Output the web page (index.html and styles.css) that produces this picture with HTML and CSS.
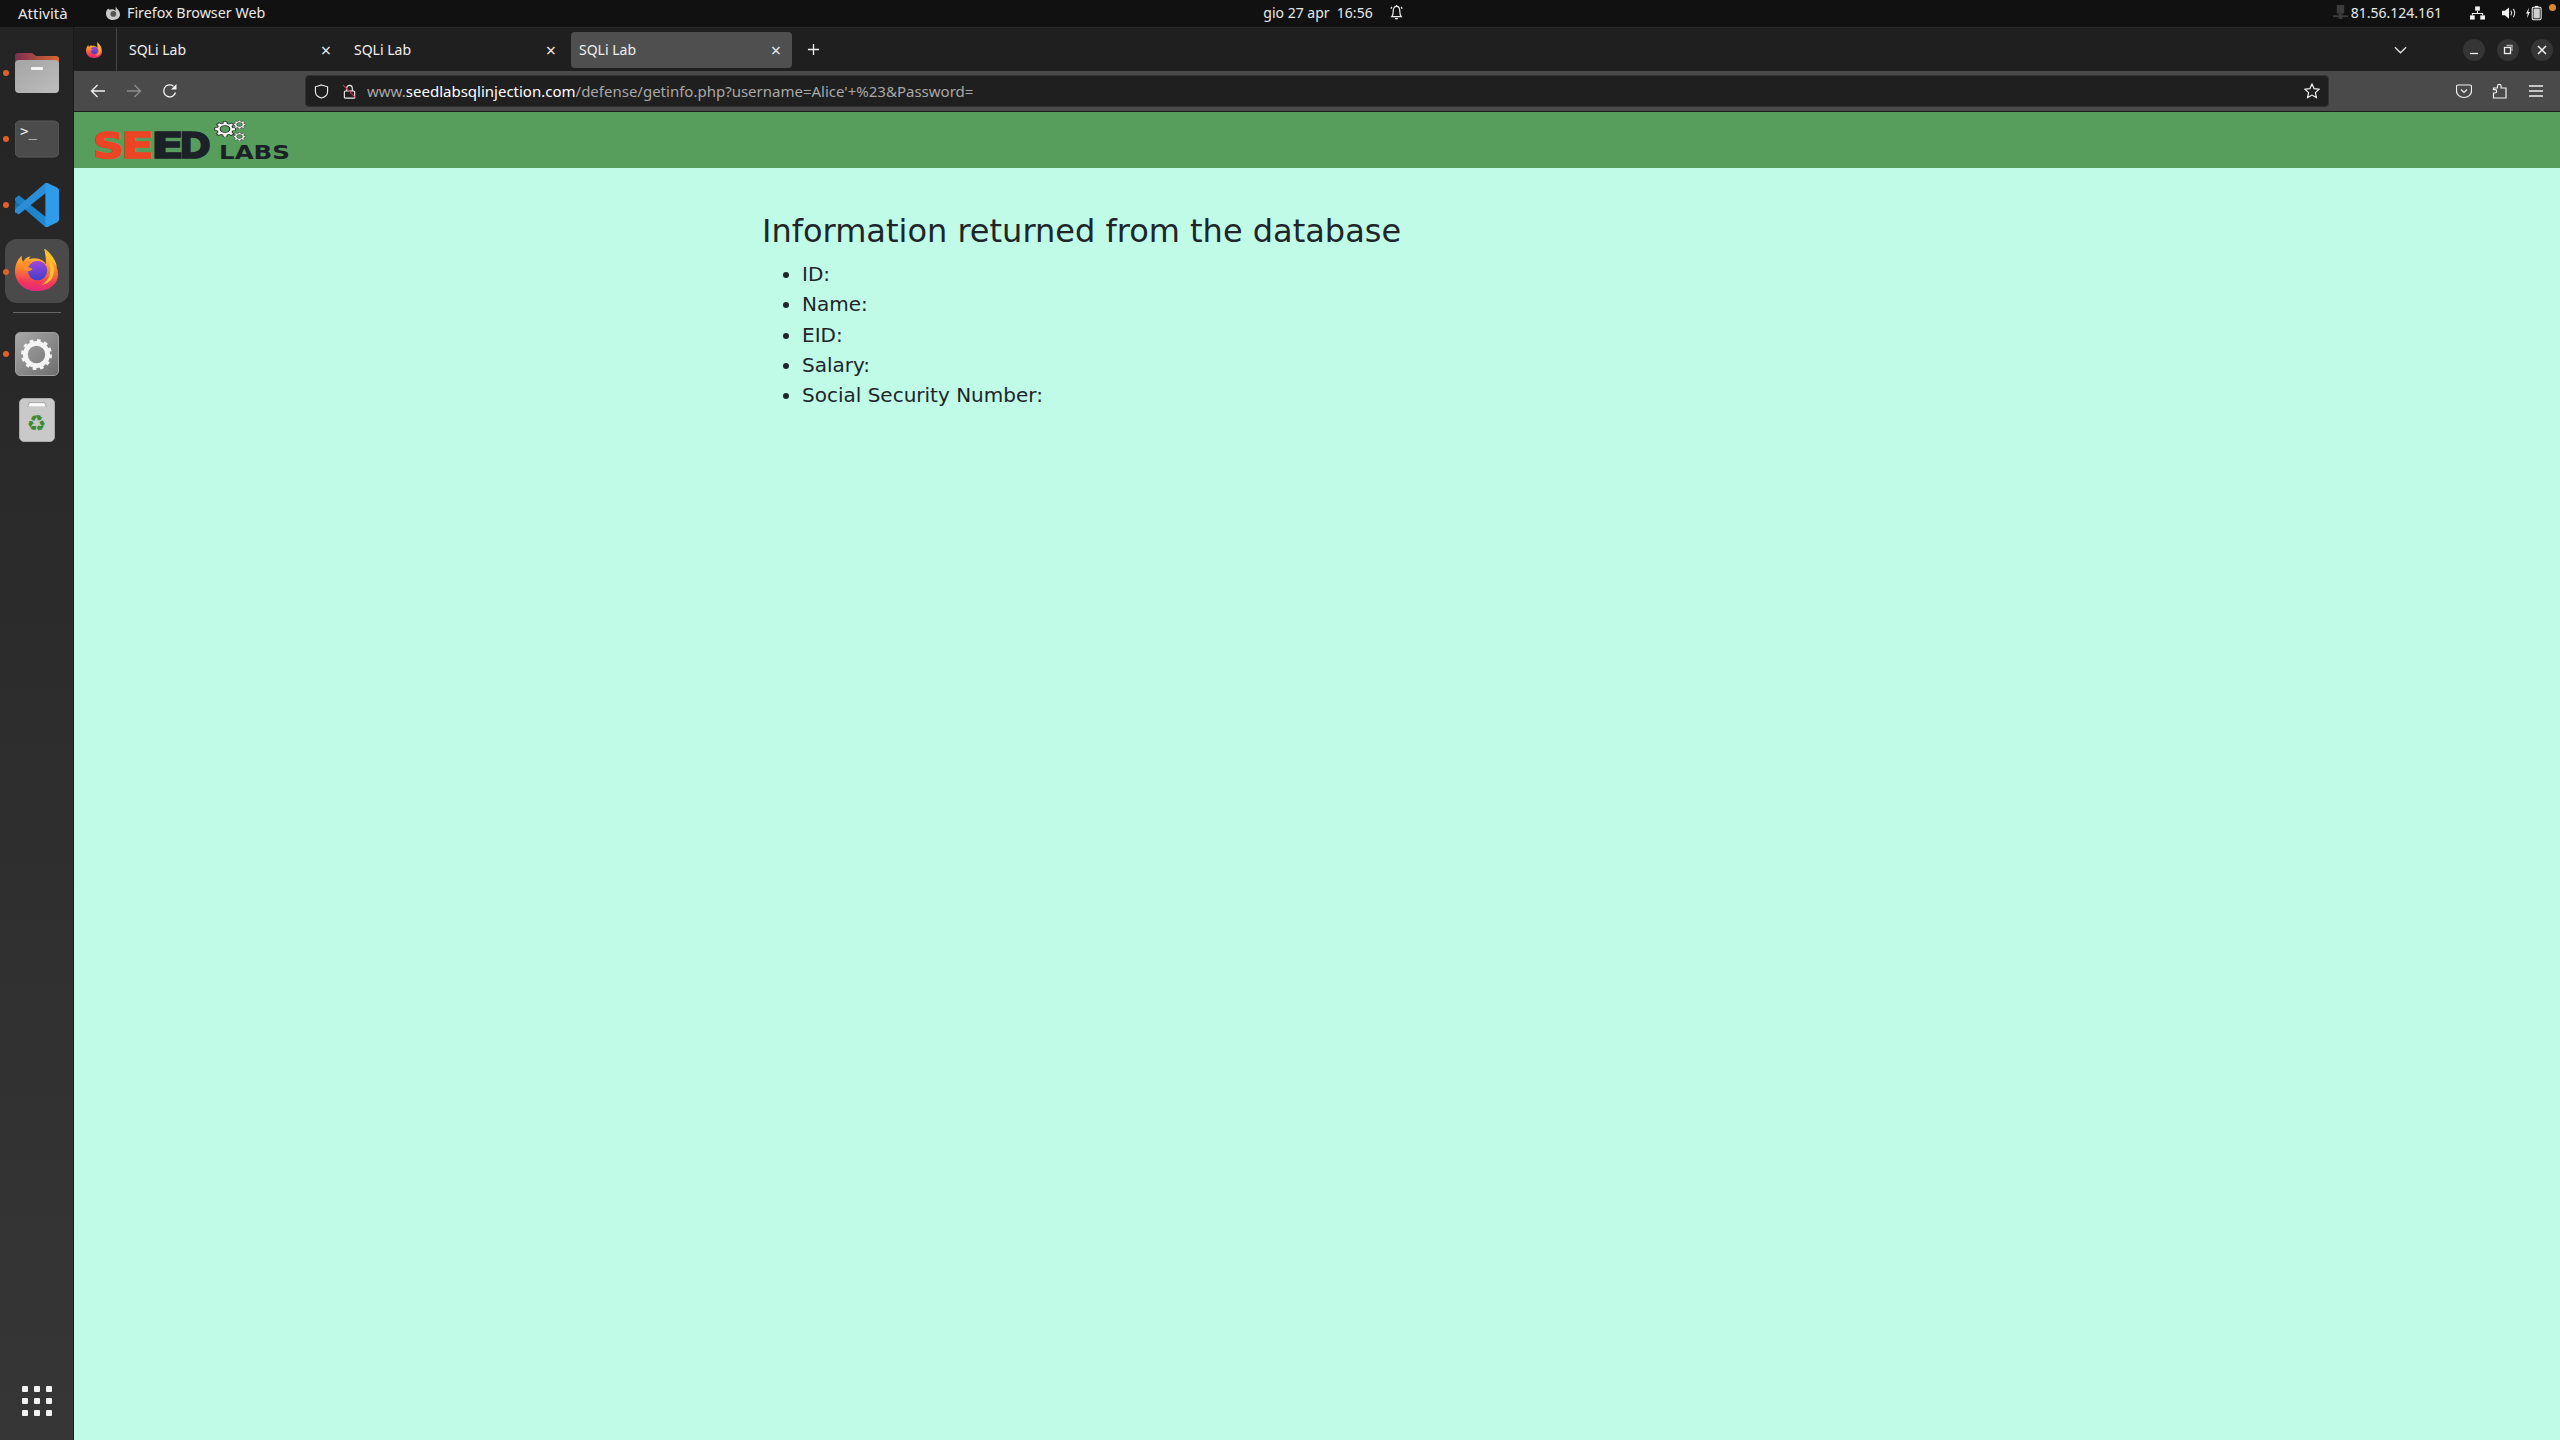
FILE: index.html
```html
<!DOCTYPE html>
<html lang="it">
<head>
<meta charset="utf-8">
<title>SQLi Lab</title>
<link rel="stylesheet" href="styles.css">
</head>
<body>
<svg class="defs" width="0" height="0" aria-hidden="true">
  <defs>
    <linearGradient id="ffBody" x1="0.55" y1="0" x2="0.45" y2="1">
      <stop offset="0" stop-color="#ffd83d"/><stop offset="0.45" stop-color="#ff8a2a"/><stop offset="0.8" stop-color="#f2385a"/><stop offset="1" stop-color="#e2287f"/>
    </linearGradient>
    <linearGradient id="ffGlobe" x1="0.5" y1="0" x2="0.5" y2="1">
      <stop offset="0" stop-color="#a446d8"/><stop offset="1" stop-color="#3f3fc8"/>
    </linearGradient>
    <linearGradient id="vsA" x1="0" y1="0" x2="1" y2="0">
      <stop offset="0" stop-color="#1c7fc4"/><stop offset="1" stop-color="#1f8ad2"/>
    </linearGradient>
    <symbol id="firefox" viewBox="0 0 44 44">
      <path fill="url(#ffBody)" d="M31 1c1 5 4 7 7 11 4 5 6 10 6 15 0 10-9 17-22 17C9 44 0 35 0 24 0 17 3 11 7 8c-.5 3 .2 5 1.500 6 1.500-3 4-5 7.500-5.500-1 1-1.500 2-1.500 3 3-1 7-1.500 11 0 3 1 5 3 6 5 .5-5-.5-10-1.500-15.500z"/>
      <path fill="#ffc02e" d="M31 1c5 4 11 11 12 19-2-4-5-6-8-7-1-4-3-8-4-12z"/>
      <circle cx="23" cy="23" r="10" fill="url(#ffGlobe)"/>
      <path fill="#ff8f2c" d="M8 14c3-2 7-1 10 1.500-3 0-5 1.500-6 4 2 .5 4 .5 6 2-2 3-7 3-9-.5-1-2-1.500-5-1-7z"/>
      <path fill="#ffc535" d="M35 13c4 3 6 9 4 15-1 5-6 9-12 10 5-3 8-7 9-12 .5-5 0-9-1-13z"/>
    </symbol>
    <symbol id="gear" viewBox="0 0 32 32">
      <path fill="currentColor" fill-rule="evenodd" d="M13.500 1h5l.8 4.200 2.400 1 3.500-2.400 3.500 3.500-2.400 3.500 1 2.400 4.200.8v5l-4.200.8-1 2.400 2.400 3.500-3.500 3.500-3.500-2.400-2.400 1-.8 4.200h-5l-.8-4.200-2.400-1-3.500 2.400-3.500-3.500 2.400-3.500-1-2.400L1 18.500v-5l4.200-.8 1-2.400-2.400-3.500 3.500-3.500 3.500 2.400 2.400-1zM16 9a7 7 0 1 0 0 14 7 7 0 0 0 0-14z"/>
    </symbol>
    <symbol id="gear12" viewBox="0 0 32 32">
      <circle cx="16" cy="16" r="11.500" fill="none" stroke="currentColor" stroke-width="5"/>
      <circle cx="16" cy="16" r="14" fill="none" stroke="currentColor" stroke-width="4" stroke-dasharray="3.700 3.630"/>
    </symbol>
  </defs>
</svg>

<header class="topbar">
  <div class="top-left">
    <span class="top-text activities">Attività</span>
    <span class="app-menu">
      <svg class="app-ff" viewBox="0 0 44 44"><path fill="#c9c9c9" d="M31 1c1 5 4 7 7 11 4 5 6 10 6 15 0 10-9 17-22 17C9 44 0 35 0 24 0 17 3 11 7 8c2 1 3 3 4 4 3-2 8-3 13-1 3 1 5 3 6 5 .5-5 0-10 1-15z"/><circle cx="23" cy="25" r="9" fill="#555"/></svg>
      <span class="top-text app-name">Firefox Browser Web</span>
    </span>
  </div>
  <div class="top-center">
    <span class="top-text clock">gio 27 apr&nbsp;&nbsp;16:56</span>
    <svg class="bell" viewBox="0 0 16 18" fill="none" stroke="#eee" stroke-width="1.300"><path d="M3 13.500c1.500-1.500 1.500-4 1.500-6C4.500 4 6 2.500 8 2.500s3.500 1.500 3.500 5c0 2 0 4.500 1.500 6z"/><path d="M6.500 15.500h3M8 1v1.500M2 5l1-2M14 5l-1-2"/></svg>
  </div>
  <div class="top-right">
    <span class="ip">
      <svg class="ip-icon" viewBox="0 0 16 16"><rect x="4" y="0" width="8" height="9" fill="#3c3c3c"/><rect x="0" y="11" width="16" height="2" fill="#3c3c3c"/><rect x="6" y="9" width="4" height="6" fill="#3c3c3c"/></svg>
      <span class="top-text">81.56.124.161</span>
    </span>
    <svg class="status-net" viewBox="0 0 16 14" fill="#f2f2f2"><rect x="5.500" y="0" width="5" height="4.500"/><rect x="0" y="9.500" width="5" height="4.500"/><rect x="11" y="9.500" width="5" height="4.500"/><path d="M7.500 4.500h1v2.500h5.500v2.500h-1V8H3v1.500H2V7h5.500z"/></svg>
    <svg class="status-vol" viewBox="0 0 16 14" fill="none"><path fill="#f2f2f2" d="M0 4.500h3L7.500 1v12L3 9.500H0z"/><path stroke="#d8d8d8" stroke-width="1.200" d="M9.500 4.500c1 1.500 1 3.500 0 5M12 2.500c2 2.500 2 6.500 0 9"/></svg>
    <svg class="status-bat" viewBox="0 0 18 16"><path fill="#f2f2f2" d="M3.500 2 0 8.500h2L1 14l3.500-7h-2z"/><rect x="7" y="1.500" width="10" height="14" rx="1.500" fill="none" stroke="#f2f2f2" stroke-width="1.200"/><rect x="10" y="0" width="4" height="1.500" fill="#f2f2f2"/><rect x="8.500" y="3" width="7" height="11" fill="#f2f2f2" opacity=".85"/></svg>
    <span class="status-dot"></span>
  </div>
</header>

<div class="desktop">
  <nav class="dock">
    <div class="slot running">
      <svg class="dock-icon" viewBox="0 0 44 42">
        <defs><linearGradient id="fTop" x1="0" x2="1" y1="0" y2="0"><stop offset="0" stop-color="#7d2f50"/><stop offset="1" stop-color="#d9682f"/></linearGradient>
        <linearGradient id="fBody" x1="0" x2="1" y1="0" y2="1"><stop offset="0" stop-color="#a4a4a4"/><stop offset="1" stop-color="#bdbdbd"/></linearGradient></defs>
        <path fill="url(#fTop)" d="M0 4a3 3 0 0 1 3-3h14l4 3h20a3 3 0 0 1 3 3v10H0z"/>
        <rect x="0" y="8" width="44" height="33" rx="4" fill="url(#fBody)"/>
        <rect x="16" y="15" width="12" height="3" rx="1" fill="#f4f4f4"/>
      </svg>
    </div>
    <div class="slot running">
      <svg class="dock-icon" viewBox="0 0 44 36">
        <rect x="0" y="0" width="44" height="36" rx="5" fill="#4b4b4b" stroke="#5c5c5c"/>
        <text x="5" y="15" class="term-text">&gt;_</text>
      </svg>
    </div>
    <div class="slot running">
      <svg class="dock-icon" viewBox="0 0 42 42">
        <path fill="#1b6fa8" d="M1 15 4 12l9 7-3 3-9 7-1-1-1-1z"/>
        <path fill="url(#vsA)" d="M0 14.500 3.500 12 30 33l2 8-3 1L0 17z"/>
        <path fill="#2a8fd8" d="M0 27.500 3.500 30 30 9l2-8-3-1L0 25z"/>
        <path fill="#2f9bea" d="M31 0l9 4.300c1 .5 2 1.500 2 3v27.400c0 1.500-1 2.500-2 3L31 42c-1 .3-2 0-2-1V1c0-1 1-1.300 2-1z"/>
      </svg>
    </div>
    <div class="slot running active">
      <svg class="dock-icon ff-dock"><use href="#firefox"/></svg>
    </div>
    <div class="dock-sep"></div>
    <div class="slot running">
      <div class="settings-tile"><svg class="settings-gear"><use href="#gear12"/></svg></div>
    </div>
    <div class="slot">
      <div class="trash-tile">
        <svg class="trash-lid" viewBox="0 0 32 8"><path fill="#fafafa" stroke="#8a8a8a" d="M4 1h24l3 7H1z"/></svg>
        <span class="recycle">♻</span>
      </div>
    </div>
    <div class="slot grid-slot">
      <div class="apps-grid"><i></i><i></i><i></i><i></i><i></i><i></i><i></i><i></i><i></i></div>
    </div>
  </nav>

  <div class="browser">
    <div class="tabbar">
      <div class="ff-slot"><svg class="ff-tab"><use href="#firefox"/></svg></div>
      <div class="tabs">
        <div class="tab"><span class="tab-title">SQLi Lab</span><span class="tab-close">×</span></div>
        <div class="tab"><span class="tab-title">SQLi Lab</span><span class="tab-close">×</span></div>
        <div class="tab tab-active"><span class="tab-title">SQLi Lab</span><span class="tab-close">×</span></div>
      </div>
      <svg class="new-tab" viewBox="0 0 14 14" stroke="#f0f0f0" stroke-width="1.400"><path d="M7 1v12M1 7h12"/></svg>
      <div class="win-controls">
        <svg class="tab-list" viewBox="0 0 14 8" fill="none" stroke="#e6e6e6" stroke-width="1.300"><path d="M1 1l6 6 6-6"/></svg>
        <span class="win-btn"><svg viewBox="0 0 22 22" stroke="#eee" stroke-width="1.300"><path d="M7 14.500h8"/></svg></span>
        <span class="win-btn"><svg viewBox="0 0 22 22" fill="none" stroke="#eee" stroke-width="1.300"><rect x="7.500" y="8.500" width="6" height="6"/><path d="M9.500 6.500h5.500v5.500" stroke="#aaa"/></svg></span>
        <span class="win-btn"><svg viewBox="0 0 22 22" stroke="#f4f4f4" stroke-width="1.500"><path d="M7 7l8 8M15 7l-8 8"/></svg></span>
      </div>
    </div>

    <div class="toolbar">
      <div class="nav-buttons">
        <svg class="tool-icon" viewBox="0 0 16 16" fill="none" stroke="#f2f2f2" stroke-width="1.300"><path d="M15 8H1.500M7.500 2l-6 6 6 6"/></svg>
        <svg class="tool-icon" viewBox="0 0 16 16" fill="none" stroke="#8d8d8d" stroke-width="1.300"><path d="M1 8h13.500M8.500 2l6 6-6 6"/></svg>
        <svg class="tool-icon" viewBox="0 0 16 16" fill="none" stroke="#f2f2f2" stroke-width="1.300"><path d="M13.500 9.500A6 6 0 1 1 11.500 3.200"/><path fill="#f2f2f2" stroke="none" d="M14.500 1v5.500H9z"/></svg>
      </div>
      <div class="urlbar">
        <svg class="shield" viewBox="0 0 16 16" fill="none" stroke="#f0f0f0" stroke-width="1.200"><path d="M8 1l6.500 2v5c0 3.500-3 6-6.500 7C4.500 14 1.500 11.500 1.500 8V3z"/></svg>
        <svg class="lock" viewBox="0 0 16 16" fill="none"><rect x="2.500" y="7.500" width="11" height="7.500" rx="1" stroke="#f0f0f0" stroke-width="1.200"/><path stroke="#f0f0f0" stroke-width="1.200" d="M5 7.500V4.500a3 3 0 0 1 6 0v3"/><path stroke="#e22850" stroke-width="1.200" d="M1 1l14 14"/></svg>
        <span class="url"><span class="url-sub">www.</span><span class="url-domain">seedlabsqlinjection.com</span><span class="url-path">/defense/getinfo.php?username=Alice'+%23&amp;Password=</span></span>
        <svg class="star" viewBox="0 0 16 16" fill="none" stroke="#f0f0f0" stroke-width="1.200"><path d="M8 1l2.100 4.600 5 .6-3.700 3.400 1 5L8 12.100 3.600 14.600l1-5L.9 6.200l5-.6z"/></svg>
      </div>
      <div class="tool-right">
        <svg class="tool-icon" viewBox="0 0 16 16" fill="none" stroke="#f0f0f0" stroke-width="1.200"><path d="M2 2h12a1.500 1.500 0 0 1 1.500 1.500V8a7.500 6.500 0 0 1-15 0V3.500A1.500 1.500 0 0 1 2 2z"/><path d="M5 6.500l3 3 3-3"/></svg>
        <svg class="tool-icon" viewBox="0 0 16 16" fill="none" stroke="#f0f0f0" stroke-width="1.200"><path d="M1.500 15V10h1.500a1.700 1.700 0 0 0 0-3.400H1.500V5h4V3.200a1.800 1.800 0 0 1 3.600 0V5H14v10z"/></svg>
        <svg class="tool-icon" viewBox="0 0 16 16" stroke="#f0f0f0" stroke-width="1.300"><path d="M1 3h14M1 8h14M1 13h14"/></svg>
      </div>
    </div>

    <main class="page">
      <div class="page-head">
        <svg class="seed-logo" viewBox="0 0 210 56" role="img" aria-label="SEED Labs">
          <text class="logo-big logo-se" x="5" y="46" textLength="31" lengthAdjust="spacingAndGlyphs">S</text>
          <text class="logo-big logo-se" x="33" y="46" textLength="33" lengthAdjust="spacingAndGlyphs">E</text>
          <text class="logo-big logo-ed" x="63" y="46" textLength="33" lengthAdjust="spacingAndGlyphs">E</text>
          <text class="logo-big logo-ed" x="91" y="46" textLength="32" lengthAdjust="spacingAndGlyphs">D</text>
          <text class="logo-labs" x="131" y="47" textLength="71" lengthAdjust="spacingAndGlyphs">LABS</text>
          <g class="logo-gears">
            <svg x="126" y="9" width="22" height="16" viewBox="0 0 32 32" preserveAspectRatio="none"><use href="#gear"/></svg>
            <svg x="145" y="8" width="13" height="9" viewBox="0 0 32 32" preserveAspectRatio="none"><use href="#gear"/></svg>
            <svg x="145" y="20" width="13" height="9" viewBox="0 0 32 32" preserveAspectRatio="none"><use href="#gear"/></svg>
          </g>
        </svg>
      </div>
      <section class="info">
        <h3 class="info-title">Information returned from the database</h3>
        <ul class="info-list">
          <li>ID:</li>
          <li>Name:</li>
          <li>EID:</li>
          <li>Salary:</li>
          <li>Social Security Number:</li>
        </ul>
      </section>
    </main>
  </div>
</div>
</body>
</html>
```
FILE: styles.css
```css
* { box-sizing: border-box; }
html, body { margin: 0; padding: 0; width: 2560px; height: 1440px; overflow: hidden; background: #111; }
body { display: flex; flex-direction: column; font-family: "Noto Sans", sans-serif; }
.defs { position: absolute; }

/* top bar */
.topbar { height: 27px; flex: none; background: #111; display: grid; grid-template-columns: 1fr auto 1fr; align-items: center; padding: 0 4px 2px 18px; }
.top-text { color: #e8e8e8; font-size: 14px; white-space: nowrap; }
.top-left { display: flex; align-items: center; }
.activities { font-size: 15px; width: 88px; }
.app-name { font-size: 14.300px; }
.app-menu { display: flex; align-items: center; gap: 7px; }
.app-ff { width: 14px; height: 14px; }
.top-center { display: flex; align-items: center; gap: 16px; padding-left: 93px; }
.bell { width: 15px; height: 17px; }
.top-right { display: flex; align-items: center; justify-content: flex-end; position: relative; }
.ip { display: flex; align-items: center; gap: 3px; margin-right: 28px; }
.ip-icon { width: 15px; height: 15px; }
.status-net { width: 15px; height: 14px; margin-right: 17px; }
.status-vol { width: 15px; height: 14px; margin-right: 9px; }
.status-bat { width: 16px; height: 16px; margin-right: 7px; }
.status-dot { width: 7px; height: 7px; border-radius: 50%; background: #d8872f; position: relative; top: -5px; }

/* desktop */
.desktop { flex: 1; display: flex; min-height: 0; }
.dock { width: 74px; flex: none; background: linear-gradient(180deg, #242424, #363636); border-right: 1px solid #1a1a1a; padding-top: 13px; display: flex; flex-direction: column; align-items: center; }
.slot { width: 64px; height: 66px; display: flex; align-items: center; justify-content: center; position: relative; flex: none; }
.slot.running::before { content: ""; position: absolute; left: -2px; top: 30px; width: 6px; height: 6px; border-radius: 50%; background: #e0602a; z-index: 1; }
.active { background: #4a4a4a; border-radius: 12px; height: 64px; margin: 1px 0; }
.dock-icon { width: 44px; height: 44px; }
.ff-dock { width: 43px; height: 43px; margin-top: -3px; }
.term-text { font-family: "DejaVu Sans Mono", monospace; font-size: 14px; fill: #f2f2f2; }
.dock-sep { width: 48px; height: 1px; background: #666; margin: 8px 0; flex: none; }
.settings-tile { width: 44px; height: 44px; border-radius: 5px; background: linear-gradient(135deg, #a8a8a8, #6e6e6e); border: 1px solid #a0a0a0; display: flex; align-items: center; justify-content: center; }
.settings-gear { width: 31px; height: 31px; color: #f4f4f4; }
.trash-tile { width: 36px; height: 44px; border-radius: 5px; background: #c9c9c9; border: 1px solid #a9a9a9; display: flex; flex-direction: column; align-items: center; }
.trash-lid { width: 30px; height: 8px; margin-top: 3px; }
.recycle { color: #3d8a32; font-family: "DejaVu Sans", sans-serif; font-size: 22px; line-height: 34px; }
.grid-slot { margin-top: auto; margin-bottom: 6px; }
.apps-grid { display: grid; grid-template-columns: repeat(3, 6px); gap: 6px; }
.apps-grid i { width: 6px; height: 6px; background: #f2f2f2; border-radius: 1px; }

/* browser */
.browser { flex: 1; min-width: 0; display: flex; flex-direction: column; }
.tabbar { height: 44px; flex: none; background: #1f1f1f; display: flex; align-items: center; border-top: 1px solid #2b2b2b; }
.ff-slot { width: 43px; height: 100%; border-right: 1px solid #444; display: flex; align-items: center; justify-content: center; padding-right: 2px; }
.ff-tab { width: 16px; height: 16px; }
.tabs { display: flex; gap: 4px; margin-left: 4px; }
.tab { width: 221px; height: 36px; padding: 0 8px; display: flex; align-items: center; justify-content: space-between; border-radius: 4px; }
.tab-active { background: #4f4f4f; }
.tab-title { color: #f0f0f0; font-size: 14px; }
.tab-close { color: #e6e6e6; font-size: 18px; line-height: 1; width: 16px; text-align: center; }
.new-tab { width: 13px; height: 13px; margin-left: 15px; }
.win-controls { margin-left: auto; display: flex; align-items: center; gap: 12px; padding-right: 7px; }
.tab-list { width: 13px; height: 8px; margin-right: 44px; }
.win-btn { width: 22px; height: 22px; border-radius: 50%; background: #353535; display: block; }
.win-btn svg { width: 22px; height: 22px; display: block; }

.toolbar { height: 41px; flex: none; background: #4a4a4a; border-bottom: 1px solid #1c1c1c; display: flex; align-items: center; }
.nav-buttons { width: 231px; display: flex; gap: 20px; padding-left: 16px; flex: none; }
.tool-icon { width: 16px; height: 16px; }
.urlbar { width: 2024px; height: 32px; flex: none; background: #1f1f1f; border-radius: 4px; display: flex; align-items: center; padding: 0 8px; border: 1px solid #333; }
.shield { width: 15px; height: 15px; }
.lock { width: 15px; height: 15px; margin-left: 13px; }
.star { width: 16px; height: 16px; margin-left: auto; }
.url { margin-left: 10px; font-size: 15px; white-space: nowrap; }
.url-sub, .url-path { color: #a8a8a8; }
.url-domain { color: #fff; }
.tool-right { display: flex; gap: 20px; margin-left: 127px; }
.tool-right .tool-icon { flex: none; }

/* page */
.page { flex: 1; background: #bffbe7; min-height: 0; color: #212529; font-family: "DejaVu Sans", sans-serif; }
.page-head { height: 56px; background: #579e5c; }
.seed-logo { width: 210px; height: 56px; display: block; margin-left: 14px; }
.logo-big { font-family: "DejaVu Sans", sans-serif; font-weight: 700; font-size: 36px; stroke-width: 1.500; }
.logo-se { fill: #ec4424; stroke: #ec4424; }
.logo-ed { fill: #1c2128; stroke: #1c2128; }
.logo-labs { font-family: "DejaVu Sans", sans-serif; font-weight: 700; font-size: 20px; fill: #1c2128; }
.logo-gears { color: #f2f2f2; stroke: #2a2a2a; stroke-width: 1.500; }
.info { width: 1110px; margin: 0 auto; padding-top: 41px; }
.info-title { margin: 0 0 6px; font-size: 32px; font-weight: 400; line-height: 44px; }
.info-list { margin: 0; padding-left: 40px; font-size: 20px; line-height: 30.300px; }
```
